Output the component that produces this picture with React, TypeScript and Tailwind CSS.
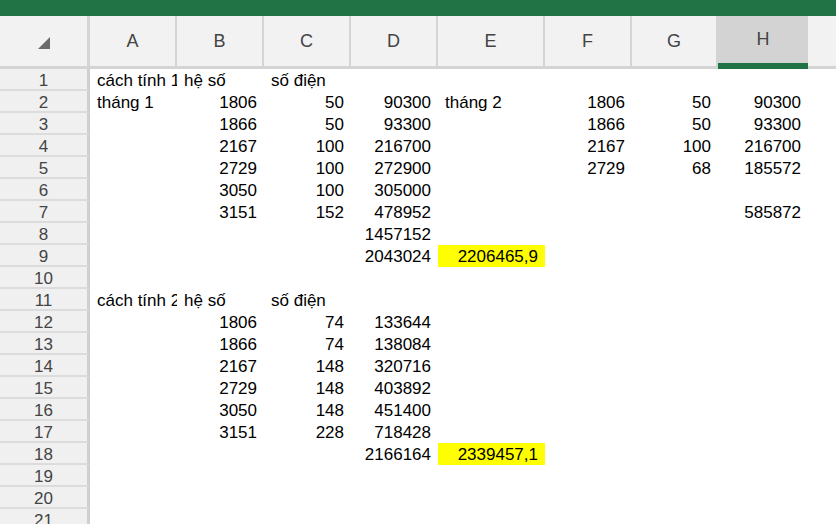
import React from 'react';

const columns = [
  { id: 'A', w: 'w-[87px]' },
  { id: 'B', w: 'w-[87px]' },
  { id: 'C', w: 'w-[87px]' },
  { id: 'D', w: 'w-[87px]' },
  { id: 'E', w: 'w-[107px]' },
  { id: 'F', w: 'w-[87px]' },
  { id: 'G', w: 'w-[86px]' },
  { id: 'H', w: 'w-[90px]' },
  { id: '', w: 'w-[87px]' },
];

// cell values, A..H
const rows: string[][] = [
  ['cách tính 1', 'hệ số', 'số điện', '', '', '', '', ''],
  ['tháng 1', '1806', '50', '90300', 'tháng 2', '1806', '50', '90300'],
  ['', '1866', '50', '93300', '', '1866', '50', '93300'],
  ['', '2167', '100', '216700', '', '2167', '100', '216700'],
  ['', '2729', '100', '272900', '', '2729', '68', '185572'],
  ['', '3050', '100', '305000', '', '', '', ''],
  ['', '3151', '152', '478952', '', '', '', '585872'],
  ['', '', '', '1457152', '', '', '', ''],
  ['', '', '', '2043024', '2206465,9', '', '', ''],
  ['', '', '', '', '', '', '', ''],
  ['cách tính 2', 'hệ số', 'số điện', '', '', '', '', ''],
  ['', '1806', '74', '133644', '', '', '', ''],
  ['', '1866', '74', '138084', '', '', '', ''],
  ['', '2167', '148', '320716', '', '', '', ''],
  ['', '2729', '148', '403892', '', '', '', ''],
  ['', '3050', '148', '451400', '', '', '', ''],
  ['', '3151', '228', '718428', '', '', '', ''],
  ['', '', '', '2166164', '2339457,1', '', '', ''],
  ['', '', '', '', '', '', '', ''],
  ['', '', '', '', '', '', '', ''],
  ['', '', '', '', '', '', '', ''],
  ['', '', '', '', '', '', '', ''],
];

const isNumber = (v: string) => /^[\d,]+$/.test(v);

const App: React.FC = () => {
  return (
    <div className="w-[836px] h-[524px] overflow-hidden bg-white font-['Liberation_Sans',Arial,sans-serif]">
      {/* title bar */}
      <div className="h-[16px] bg-[#217346]" />

      {/* column headers */}
      <div className="flex h-[53px] bg-[#f2f2f2]">
        <div className="w-[90px] shrink-0 flex items-center justify-center border-r-[3px] border-b-[3px] border-[#d4d4d4]">
          <svg width="14" height="14" viewBox="0 0 14 14" className="mt-[4px]">
            <polygon points="13,1 13,13 1,13" fill="#6b6b6b" />
          </svg>
        </div>
        {columns.map((c, j) => (
          <div
            key={j}
            className={`${c.w} shrink-0 flex items-center justify-center text-[18px] text-[#444] ${
              c.id === 'H'
                ? 'bg-[#d3d3d3] border-b-[6px] border-[#217346]'
                : 'border-r-2 border-b-[3px] border-[#d4d4d4]'
            }`}
          >
            {c.id}
          </div>
        ))}
      </div>

      {/* rows */}
      {rows.map((r, i) => (
        <div key={i} className="flex h-[22px] overflow-hidden">
          <div className="w-[90px] h-[22px] shrink-0 bg-[#f0f0f0] border-r-[3px] border-b-2 border-r-[#cfcfcf] border-b-[#dcdcdc] text-center text-[17px] leading-[23px] text-[#444] overflow-hidden">
            {i + 1}
          </div>
          {columns.map((c, j) => {
            const v = j < 8 ? r[j] : '';
            const yellow = v === '2206465,9' || v === '2339457,1';
            return (
              <div
                key={j}
                className={`${c.w} h-[22px] shrink-0 overflow-hidden whitespace-nowrap text-[17px] leading-[24px] text-black px-[7px] ${
                  isNumber(v) ? 'text-right' : 'text-left'
                } ${yellow ? 'bg-[#ffff00]' : ''}`}
              >
                {v}
              </div>
            );
          })}
        </div>
      ))}
    </div>
  );
};

export default App;
